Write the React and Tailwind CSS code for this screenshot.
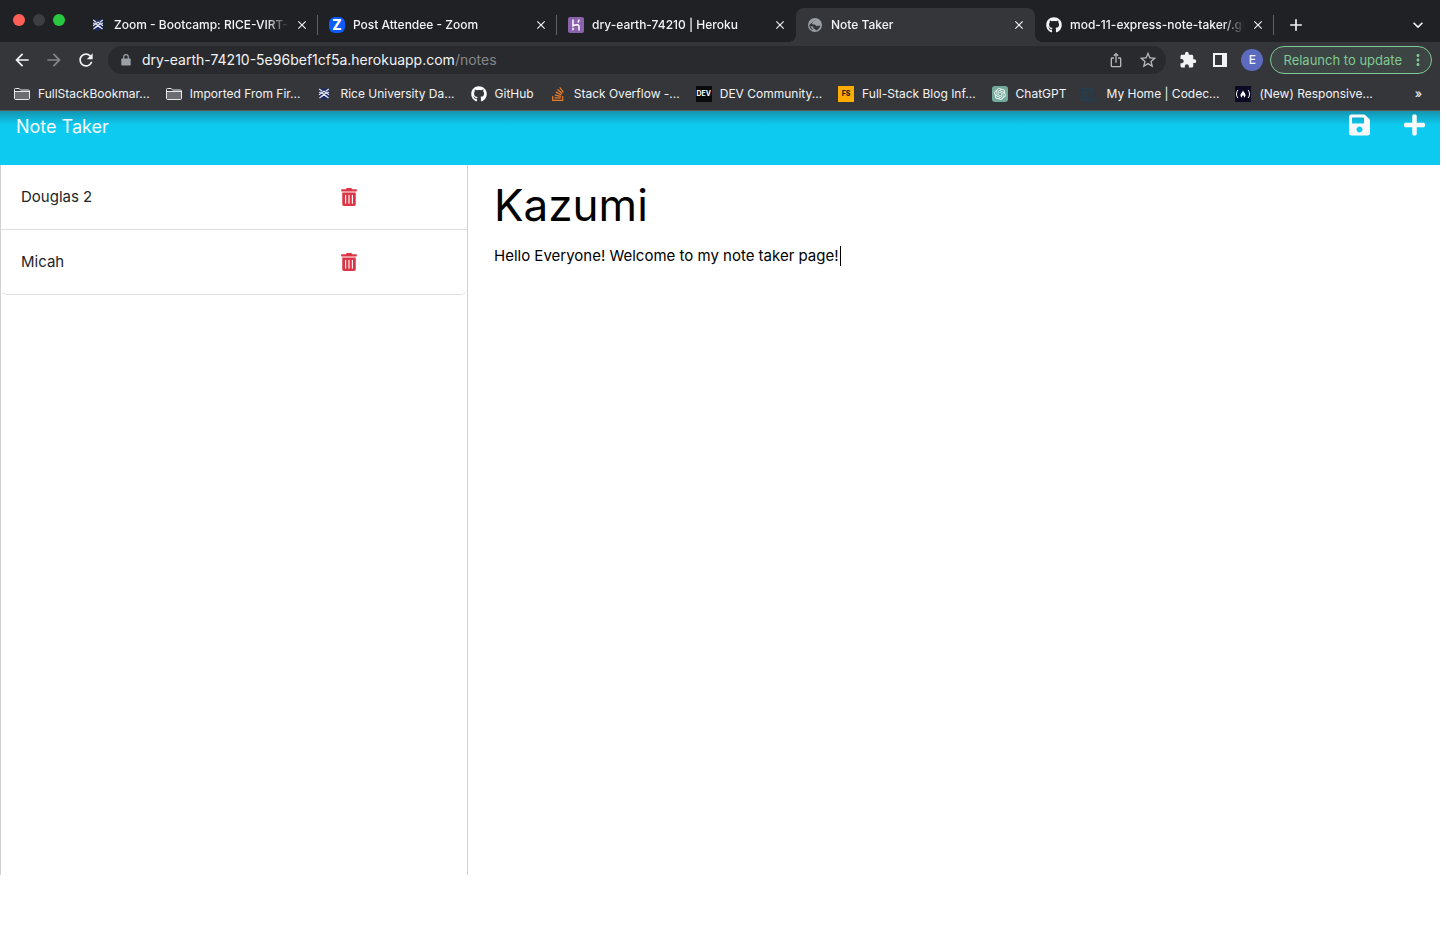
import { useState } from "react";
import {
  MdArrowBack,
  MdArrowForward,
  MdRefresh,
  MdIosShare,
  MdStarBorder,
  MdExtension,
  MdMoreVert,
  MdClose,
  MdAdd,
  MdKeyboardArrowDown,
} from "react-icons/md";
import { FaGithub, FaStackOverflow, FaSave, FaPlus, FaTrashAlt } from "react-icons/fa";
import { RiOpenaiFill } from "react-icons/ri";

function RiceIcon() {
  return (
    <svg viewBox="0 0 16 16" className="size-4" aria-hidden="true">
      <path d="M3 2.500h10v7.500c0 2-2.500 3-5 4-2.500-1-5-2-5-4z" fill="#1b2a63" />
      <path d="M3 8.800 8 5.300l5 3.500M3.500 12 8 8.600l4.500 3.400" fill="none" stroke="#e6e8f2" strokeWidth="1.200" />
      <path d="m3.200 3 3 2.300M12.800 3l-3 2.300M3 6.200h2M11 6.200h2M5.500 10.500l5-4M10.500 10.500l-5-4" stroke="#e6e8f2" strokeWidth="1.100" />
    </svg>
  );
}

function HerokuIcon() {
  return (
    <svg viewBox="0 0 16 16" className="size-4" aria-hidden="true">
      <rect width="16" height="16" rx="2" fill="#8a62ad" />
      <path d="M5 2.500v6.300c1.500-.7 3-1.100 4.200-1.100 1.300 0 1.800.7 1.800 1.800v4M11 2.500c0 1.200-.4 2.200-1.200 3" fill="none" stroke="#fff" strokeWidth="1.500" />
      <path d="m4.300 10.200 2.200 1.700-2.200 1.800z" fill="#fff" />
    </svg>
  );
}

function GlobeIcon() {
  return (
    <svg viewBox="0 0 16 16" className="size-4" aria-hidden="true">
      <circle cx="8" cy="8" r="7" fill="#9aa0a6" />
      <path
        d="M8.500 2.400c-.2 1.100-2.200 1.200-2.200 2.400 0 1-1.300.7-1.300 1.700s1.300.9 2.500.9c1.300 0 1.200 1.300 2.300 1.500 1.500.2 2.300-.5 3.600-.4-.3 2.200-2 4.200-4.300 4.900-.9 0-.8-.9-.8-1.500H7c-.6 0-.8-.7-.6-1.300.2-.6-.3-1-.9-1.100L2.400 8.900c.6.500 1 .6 1.600 1.200.7.800.6 1.600 1.500 2.200.3.200.4.700.4 1C3.800 12.500 2.300 10.500 2.300 8"
        fill="#35363a"
      />
      <path d="M9 5.200c.8-.5 1.700-.3 2.100.4.300.6-.2 1.100-.8 1.200-.7.100-1.700-1-1.300-1.600z" fill="#9aa0a6" />
    </svg>
  );
}

function LockIcon() {
  return (
    <svg viewBox="0 0 14 14" className="size-3.5" aria-hidden="true">
      <path d="M3 5.500h8c.4 0 .7.300.7.700v5.600c0 .4-.3.700-.7.700H3c-.4 0-.7-.3-.7-.7V6.200c0-.4.3-.7.700-.7z" fill="#9aa0a6" />
      <path d="M4.700 6V3.900a2.300 2.300 0 0 1 4.600 0V6" fill="none" stroke="#9aa0a6" strokeWidth="1.200" />
    </svg>
  );
}

function ZoomIcon() {
  return (
    <span className="flex size-4 items-center justify-center rounded-md bg-[#0b5cff] text-[14px] leading-4 font-extrabold text-white">
      Z
    </span>
  );
}

function FolderIcon() {
  return (
    <svg viewBox="0 0 16 16" className="size-4" aria-hidden="true">
      <path d="M.500 3.500c0-.6.300-1 .900-1h3.800l1.300 1.500h8c.6 0 1 .4 1 1v7.500c0 .6-.4 1-1 1h-13c-.6 0-1-.4-1-1z" fill="#35363a" stroke="#e8eaed" />
      <path d="M1 5.500h14v7.500H1z" fill="#6b6c70" />
      <path d="M1 5.500h14" stroke="#e8eaed" />
    </svg>
  );
}

function DevIcon() {
  return (
    <span className="flex size-4 items-center justify-center bg-[#0a0a0a] text-[7px] leading-4 font-bold text-white">
      DEV
    </span>
  );
}

function FullStackIcon() {
  return (
    <span className="flex size-4 items-center justify-center bg-[#ffab00] text-[7px] leading-4 font-extrabold text-[#2b2410]">
      FS
    </span>
  );
}

function ChatIcon() {
  return (
    <span className="flex size-4 items-center justify-center rounded-[3px] bg-[#74aa9c] text-white">
      <RiOpenaiFill className="size-3.5" />
    </span>
  );
}

function CodecademyIcon() {
  return (
    <svg viewBox="0 0 16 16" className="size-4" aria-hidden="true" fill="none" stroke="#1f4058" strokeWidth="1.300">
      <path d="M.700 2.500h9.300v11.500H.700zM7.300 6H3.700v4.500h3.600M12 14h1.500M14.500 14H16" />
    </svg>
  );
}

function FreeCodeCampIcon() {
  return (
    <svg viewBox="0 0 16 16" className="size-4" aria-hidden="true">
      <path d="M0 0h16v16H0z" fill="#0a0a23" />
      <path d="M3 4c-2 2.200-2 5.800 0 8M13 4c2 2.200 2 5.800 0 8" fill="none" stroke="#fff" />
      <path d="M8 4.200c.2 1.800 2.500 2.800 2.500 5 0 1.200-.7 2-1.700 2.500.5-1.100.2-1.800-.8-2.500-1 .7-1.300 1.400-.8 2.500-1-.5-1.700-1.300-1.700-2.500C5.500 7.500 7.500 6.500 8 4.200z" fill="#fff" />
    </svg>
  );
}

const tabs = [
  { title: "Zoom - Bootcamp: RICE-VIRT-", icon: <RiceIcon /> },
  { title: "Post Attendee - Zoom", icon: <ZoomIcon /> },
  { title: "dry-earth-74210 | Heroku", icon: <HerokuIcon /> },
  { title: "Note Taker", icon: <GlobeIcon />, active: true },
  { title: "mod-11-express-note-taker/.gi", icon: <FaGithub className="size-4" /> },
];

const bookmarks = [
  { title: "FullStackBookmar...", icon: <FolderIcon /> },
  { title: "Imported From Fir...", icon: <FolderIcon /> },
  { title: "Rice University Da...", icon: <RiceIcon /> },
  { title: "GitHub", icon: <FaGithub className="size-4 text-white" /> },
  { title: "Stack Overflow -...", icon: <FaStackOverflow className="size-4 text-[#e87a2a]" /> },
  { title: "DEV Community...", icon: <DevIcon /> },
  { title: "Full-Stack Blog Inf...", icon: <FullStackIcon /> },
  { title: "ChatGPT", icon: <ChatIcon /> },
  { title: "My Home | Codec...", icon: <CodecademyIcon /> },
  { title: "(New) Responsive...", icon: <FreeCodeCampIcon /> },
];

function Tab({ tab, divider }) {
  const shape = tab.active
    ? "relative rounded-t-lg bg-[#35363a] before:absolute before:bottom-0 before:-left-2 before:size-2 before:bg-[radial-gradient(circle_at_0_0,transparent_8px,#35363a_8px)] after:absolute after:-right-2 after:bottom-0 after:size-2 after:bg-[radial-gradient(circle_at_100%_0,transparent_8px,#35363a_8px)]"
    : "";
  return (
    <div className={`flex h-[34px] max-w-[239px] min-w-0 flex-1 items-center pl-[11px] ${shape}`}>
      <button type="button" className="flex min-w-0 flex-1 items-center gap-2 text-left">
        <span className="shrink-0">{tab.icon}</span>
        <span className="flex-1 overflow-hidden whitespace-nowrap [mask-image:linear-gradient(to_right,black_86%,transparent_98%)]">
          {tab.title}
        </span>
      </button>
      <button type="button" aria-label={`Close ${tab.title}`} className="flex w-5 shrink-0 justify-center">
        <MdClose className="size-3.5 stroke-current" />
      </button>
      <span className={`ml-[5px] h-5 w-px ${divider ? "bg-[#5f6368]" : ""}`} />
    </div>
  );
}

function Browser() {
  return (
    <div className="border-b border-[#5c5650] bg-[#35363a] text-[12px] leading-4 font-medium text-[#f1f3f4]">
      <div className="flex h-[42px] items-end bg-[#202124]">
        <div className="flex w-[79px] shrink-0 gap-2 self-start pt-3.5 pl-[13px]">
          <span className="size-3 rounded-full bg-[#ff5f57]" />
          <span className="size-3 rounded-full bg-[#3d3e42]" />
          <span className="size-3 rounded-full bg-[#28c840]" />
        </div>
        {tabs.map((tab, i) => (
          <Tab key={tab.title} tab={tab} divider={i !== 2 && i !== 3} />
        ))}
        <button type="button" aria-label="New tab" className="ml-3 flex h-[34px] items-center">
          <MdAdd className="size-5 stroke-current" />
        </button>
        <button type="button" aria-label="Search tabs" className="mr-3 ml-auto flex h-[34px] items-center">
          <MdKeyboardArrowDown className="size-5" />
        </button>
      </div>

      <div className="flex h-9 items-center pr-2 pl-3">
        <div className="flex gap-3">
          <button type="button" aria-label="Back"><MdArrowBack className="size-5" /></button>
          <button type="button" aria-label="Forward" className="text-[#85878a]"><MdArrowForward className="size-5" /></button>
          <button type="button" aria-label="Reload"><MdRefresh className="size-5" /></button>
        </div>
        <div className="ml-3 flex h-7 min-w-0 flex-1 items-center rounded-full bg-[#292a2d] pr-2 pl-[11px] text-[14px] font-normal">
          <LockIcon />
          <label htmlFor="address" className="sr-only">Address</label>
          <input
            id="address"
            className="ml-[9px] field-sizing-content leading-6 outline-none"
            defaultValue="dry-earth-74210-5e96bef1cf5a.herokuapp.com"
            spellCheck={false}
          />
          <span className="leading-6 text-[#85878a]">/notes</span>
          <button type="button" aria-label="Share" className="ml-auto text-[#b4b7bb]"><MdIosShare className="size-4" /></button>
          <button type="button" aria-label="Bookmark this page" className="ml-3.5 text-[#b4b7bb]"><MdStarBorder className="size-5" /></button>
        </div>
        <button type="button" aria-label="Extensions" className="ml-[13px]"><MdExtension className="size-[18px]" /></button>
        <button type="button" aria-label="Side panel" className="ml-4">
          <svg viewBox="0 0 14 14" className="size-3.5" aria-hidden="true">
            <path d="M0 0h14v14H0zM2 2v10h7V2z" fill="currentColor" fillRule="evenodd" />
          </svg>
        </button>
        <button type="button" aria-label="Profile" className="ml-3.5 size-[22px] rounded-full bg-[#5c6bc0] text-[12px]">E</button>
        <button type="button" className="ml-[7px] flex h-7 items-center gap-[7px] rounded-full border border-[#81c995] bg-[#3c4543] pr-1 pl-3 text-[13px] font-normal text-[#81c995]">
          Relaunch to update
          <MdMoreVert className="size-[18px]" />
        </button>
      </div>

      <nav aria-label="Bookmarks" className="flex h-8 items-center gap-4 pr-[18px] pl-3.5 font-normal">
        {bookmarks.map((b) => (
          <a key={b.title} href="#" className="flex shrink-0 items-center gap-2 whitespace-nowrap">
            {b.icon}
            {b.title}
          </a>
        ))}
        <button type="button" aria-label="More bookmarks" className="ml-auto font-medium">»</button>
      </nav>
    </div>
  );
}

export default function App() {
  const [notes, setNotes] = useState(["Douglas 2", "Micah"]);
  const [title, setTitle] = useState("Kazumi");
  const [body, setBody] = useState("Hello Everyone! Welcome to my note taker page!");

  return (
    <div className="min-h-screen bg-white pr-[7px] font-['Inter','Liberation_Sans',sans-serif] text-[#212529]">
      <Browser />
      <header className="flex h-[54px] items-start justify-between bg-[#0dcaf0] bg-[linear-gradient(to_bottom,rgb(33_37_41/0.32),transparent_14px)] pr-[15px] pl-4 text-[#f8f9fa]">
        <a href="#" className="text-[18px] leading-8">Note Taker</a>
        <div className="flex gap-[34px] pt-0.5">
          <button type="button" aria-label="Save note"><FaSave className="h-6 w-[21px]" /></button>
          <button type="button" aria-label="New note"><FaPlus className="h-6 w-[21px]" /></button>
        </div>
      </header>

      <div className="flex">
        <aside className="h-[710px] w-[468px] shrink-0 border-x border-[#ced0d2]">
          <ul className="overflow-hidden rounded-b-md">
            {notes.map((note) => (
              <li key={note} className="flex h-[65px] items-center border-b border-[#dfdfdf] px-5 text-[15px] last:rounded-b-md">
                <a href="#" className="w-3/4">{note}</a>
                <button
                  type="button"
                  aria-label={`Delete ${note}`}
                  className="text-[#dc3545]"
                  onClick={() => setNotes(notes.filter((n) => n !== note))}
                >
                  <FaTrashAlt className="h-[18px] w-4" />
                </button>
              </li>
            ))}
          </ul>
        </aside>
        <main className="min-w-0 flex-1 pt-2 pl-[26px] text-black">
          <label htmlFor="note-title" className="sr-only">Note title</label>
          <input
            id="note-title"
            className="block w-full text-[44px] leading-[64px] outline-none"
            value={title}
            onChange={(e) => setTitle(e.target.value)}
          />
          <div className="relative mt-[7px]">
            <label htmlFor="note-text" className="sr-only">Note text</label>
            <textarea
              id="note-text"
              className="block h-40 w-full resize-none text-[15px] leading-6 caret-transparent outline-none"
              value={body}
              onChange={(e) => setBody(e.target.value)}
              spellCheck={false}
            />
            <span className="absolute top-0.5 left-[346px] h-5 w-px bg-black" />
          </div>
        </main>
      </div>
    </div>
  );
}
